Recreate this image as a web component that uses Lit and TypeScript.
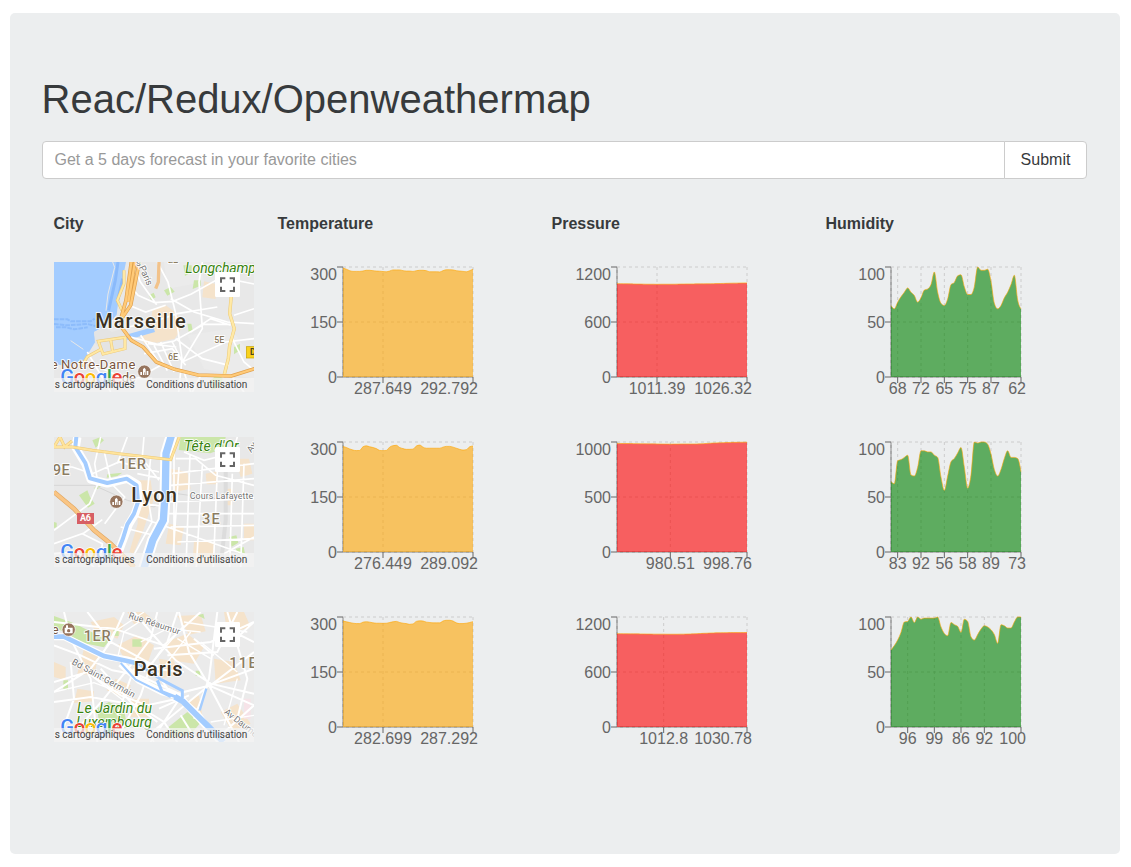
import { LitElement, html, svg, css } from "lit";
import { customElement, property } from "lit/decorators.js";

interface Series {
  values: number[];
  max: number;
  ticks: [number, string][];
}

interface City {
  name: string;
  temperature: Series;
  pressure: Series;
  humidity: Series;
}

const CITIES: City[] = [
  {
    name: "Marseille",
    temperature: {
      values: [297, 294, 290, 288, 288, 288, 289, 291, 291, 290, 289, 288.5, 287.6, 287, 289, 292, 292, 292, 290, 289, 289, 288, 290, 291, 291, 290, 287, 287, 287, 286.5, 290, 292.5, 292.5, 292, 290, 289, 288, 287, 290, 294],
      max: 300,
      ticks: [[12, "287.649"], [39, "292.792"]],
    },
    pressure: {
      values: [1018, 1018, 1017, 1017, 1016, 1015, 1014, 1014, 1013, 1012, 1012, 1012, 1011, 1012, 1012, 1012, 1012, 1012, 1013, 1014, 1014, 1015, 1015, 1015, 1016, 1016, 1016, 1017, 1017, 1018, 1019, 1020, 1021, 1022, 1023, 1024, 1024, 1025, 1026, 1026],
      max: 1200,
      ticks: [[12, "1011.39"], [39, "1026.32"]],
    },
    humidity: {
      values: [65, 62, 68, 73, 77, 81, 77, 74, 68, 72, 79, 80, 84, 95.5, 77, 67, 65, 71, 84, 86, 92, 93, 82, 75, 75, 82, 100, 97, 97, 98, 87, 67, 62, 65, 72, 77, 84, 92.5, 70, 62],
      max: 100,
      ticks: [[2, "68"], [9, "72"], [16, "65"], [23, "75"], [30, "87"], [39, "62"]],
    },
  },
  {
    name: "Lyon",
    temperature: {
      values: [288, 285, 281, 278, 276.5, 277, 287, 289.5, 287, 285, 282, 277, 276.4, 277, 286, 290, 291, 285, 282, 280, 280, 280.5, 289, 291.5, 286, 283, 283, 283, 283, 283, 286, 288, 288, 286, 283, 280, 278, 279, 287, 289],
      max: 300,
      ticks: [[12, "276.449"], [39, "289.092"]],
    },
    pressure: {
      values: [987, 987, 986, 986, 986, 985, 985, 984, 984, 983, 983, 983, 982, 982, 981, 981, 980.5, 981, 981, 982, 982, 982, 982, 982, 982, 983, 985, 987, 989, 991, 992, 993, 994, 995, 996, 997, 997, 998, 998, 998.7],
      max: 1000,
      ticks: [[16, "980.51"], [39, "998.76"]],
    },
    humidity: {
      values: [64, 62, 83, 84, 86, 88, 70, 69, 77, 92, 92, 91, 91, 88, 86, 68, 56, 69, 82, 85, 90, 95, 77, 58, 70, 100, 99, 100, 100, 98, 89, 75, 69, 75, 85, 92, 86, 86, 85, 73],
      max: 100,
      ticks: [[2, "83"], [9, "92"], [16, "56"], [23, "58"], [30, "89"], [39, "73"]],
    },
  },
  {
    name: "Paris",
    temperature: {
      values: [289, 287, 285, 283, 282, 282, 286, 287, 286, 284, 283, 283, 282.7, 283, 285, 287, 288, 285, 283, 282, 280, 281, 288, 289.5, 289, 286, 285, 284, 284, 284, 289, 291, 291, 289, 284, 282, 282, 283, 285, 287.3],
      max: 300,
      ticks: [[12, "282.699"], [39, "287.292"]],
    },
    pressure: {
      values: [1018, 1018, 1017, 1017, 1016, 1016, 1016, 1015, 1015, 1014, 1014, 1013, 1013, 1013, 1013, 1012, 1012, 1012, 1012, 1013, 1013, 1014, 1015, 1016, 1018, 1020, 1022, 1023, 1025, 1026, 1028, 1028, 1029, 1029, 1030, 1030, 1030, 1030, 1030, 1031],
      max: 1200,
      ticks: [[14, "1012.8"], [39, "1030.78"]],
    },
    humidity: {
      values: [70, 74, 79, 86, 95.5, 96, 100, 95, 100, 98, 99, 99, 99, 99, 100, 91, 85, 83, 95, 93, 91.5, 86, 98, 96, 82, 79, 84, 89, 92, 91, 88.5, 84, 76, 93, 92, 90, 90, 95.5, 100, 100],
      max: 100,
      ticks: [[5, "96"], [13, "99"], [21, "86"], [28, "92"], [39, "100"]],
    },
  },
];

/* Monotone cubic interpolation through evenly ordered points. */
function monotonePath(points: [number, number][]): string {
  const n = points.length;
  const slopes: number[] = [];
  const secant = (i: number) =>
    (points[i + 1][1] - points[i][1]) / (points[i + 1][0] - points[i][0]);
  for (let i = 1; i < n - 1; i++) {
    const a = secant(i - 1);
    const b = secant(i);
    slopes[i] =
      (Math.sign(a) + Math.sign(b)) *
      Math.min(Math.abs(a), Math.abs(b), 0.25 * Math.abs(a + b));
  }
  slopes[0] = (3 * secant(0) - slopes[1]) / 2;
  slopes[n - 1] = (3 * secant(n - 2) - slopes[n - 2]) / 2;
  let d = `M${points[0][0]},${points[0][1]}`;
  for (let i = 1; i < n; i++) {
    const [x0, y0] = points[i - 1];
    const [x1, y1] = points[i];
    const dx = (x1 - x0) / 3;
    d += `C${x0 + dx},${y0 + dx * slopes[i - 1]},${x1 - dx},${y1 - dx * slopes[i]},${x1},${y1}`;
  }
  return d;
}

@customElement("forecast-chart")
class ForecastChart extends LitElement {
  static styles = css`
    :host { display: block; width: 200px; height: 150px; }
    .chart { display: block; width: 200px; height: 150px; overflow: hidden; }
    .grid { stroke: #ccc; stroke-dasharray: 3 3; fill: none; }
    .axis { stroke: #666; fill: none; }
    .label { fill: #666; font: 16px "Liberation Sans", Arial, sans-serif; }
    .area { fill-opacity: 0.6; stroke: none; }
    .curve { fill: none; stroke: orange; stroke-width: 1; stroke-opacity: 0.6; }
  `;

  @property({ attribute: false }) series!: Series;
  @property() color = "orange";

  render() {
    const { values, max, ticks } = this.series;
    const left = 65, right = 195, top = 5, bottom = 115;
    const px = (i: number) => left + (i * (right - left)) / (values.length - 1);
    const py = (v: number) => bottom - (v / max) * (bottom - top);
    const line = monotonePath(values.map((v, i) => [px(i), py(v)] as [number, number]));
    const area = `${line}L${right},${bottom}L${left},${bottom}Z`;
    const rows = [0, max / 2, max];
    return html`<svg class="chart" viewBox="0 0 200 150">
      <path class="axis" d="M65 115H195M65 5V115"></path>
      ${rows.map((v) => svg`<line class="grid" x1=${left} x2=${right} y1=${py(v)} y2=${py(v)}></line>`)}
      ${[left, ...ticks.map(([i]) => px(i))].map(
        (x) => svg`<line class="grid" x1=${x} x2=${x} y1=${top} y2=${bottom}></line>`,
      )}
      ${ticks.map(([i, text]) => {
        const last = i === values.length - 1;
        return svg`<line class="axis" x1=${px(i)} x2=${px(i)} y1="115" y2="121"></line>
          <text class="label" x=${last ? 200 : px(i)} y="132.4" text-anchor=${last ? "end" : "middle"}>${text}</text>`;
      })}
      ${rows.map(
        (v) => svg`<line class="axis" x1="59" x2="65" y1=${py(v)} y2=${py(v)}></line>
          <text class="label" x="59" y=${Math.max(py(v), 12) + 5.7} text-anchor="end">${v}</text>`,
      )}
      <path class="area" fill=${this.color} d=${area}></path>
      <path class="curve" d=${line}></path>
    </svg>`;
  }
}

const museum = (x: number, y: number) => svg`<g transform="translate(${x} ${y})">
  <circle r="20" fill="#96745d" stroke="#fff" stroke-width="2"></circle>
  <path d="M-12 10V1h5v9zM-4 10V-7l4-5 4 5V10H1V2H-1v8zM7 10V-2h5v12z" fill="#fff"></path>
</g>`;

const marseille = svg`
  <rect x="30" y="30" width="600" height="390" fill="#e8e8e8"></rect>
  <path d="M360 30L470 30 480 90 370 110z M430 250L560 230 630 320 630 380 480 350z" fill="#ebebeb"></path>
  <path d="M325 175l40-15 35 25 12 45-20 30-55 12-28-15 12-40zM290 250l35-8 10 28-35 6zM480 88l35 8 0 45-40-5z" fill="#f5e3cb"></path>
  <path d="M315 130l14-8 6 14-14 8zM360 115l20-10 12 14-22 12zM430 215l12 0 4 20-12 4zM450 85l20 0 0 16-24 10zM418 40l25 0 0 20-20 12zM570 285l18-10 0 20-18 12zM500 385l20-18 16 12-5 25-28 10z" fill="#cbe6a9"></path>
  <path d="M30 30H246L232 100 222 155 218 188 195 215 150 240 155 268 128 312 115 340 100 330 75 344 30 335z" fill="#a3ccff"></path>
  <path d="M246 248L328 225 333 240 250 264z" fill="#a3ccff"></path>
  <path d="M222 30l-8 55-20 90M236 80l-16 70" fill="none" stroke="#8abafb" stroke-width="9"></path>
  <path d="M30 202h40l10 6h60l12-8M30 216l40 4 60-4 24 6M36 226h30l25 6 40-6" fill="none" stroke="#8dbcfb" stroke-width="6" stroke-dasharray="14 3"></path>
  <path d="M206 30l6 16-20 80-6 50M80 266l38 26" fill="none" stroke="#e8e8e8" stroke-width="3"></path>
  <path d="M150 240l32-12 22 12 26-8 15 22-12 40-58 10-22-32z" fill="#e4e4e4"></path>
  <path d="M262 105l20 25 50 22 55-4 55-22 90-50 98 20M270 30l18 58 50 70M340 30l32 60 22 90 20 140-10 100M380 140l70 40 100 30 80 5M255 160l50 20 60-20M250 225l60-10 90-30 120-20M260 255l80 22 50-10 90-50 80 0M290 250l60 90M312 275l85 10M330 280l40 76M350 270l40 90M300 305l85-15 40 50M385 270l30 60 130-60 85-10M395 260l80 60 80 20M475 30l-10 60 10 140-60 100M440 240l60-40 60 20M570 190l60-20M560 250l40 80 30 25M350 340l-80 45M420 360l20 60M470 370l-25 50M560 370l40 50M130 300l70 120M175 350l70 30 80 0" fill="none" stroke="#fff" stroke-width="5"></path>
  <path d="M345 30l-2 60-8 20" fill="none" stroke="#f2c28a" stroke-width="10"></path>
  <path d="M240 55l0 40-20 50 14 30M163 268l80-12 0 34-66 16-14-38zM200 263l6 36M170 292l-40 22-18 30" fill="none" stroke="#ecc878" stroke-width="9"></path>
  <path d="M240 55l0 40-20 50 14 30M163 268l80-12 0 34-66 16-14-38zM200 263l6 36M170 292l-40 22-18 30" fill="none" stroke="#ffe8a3" stroke-width="6"></path>
  <path d="M563 120l-6 65 14 45-14 50-4 40-14 55" fill="none" stroke="#ecca78" stroke-width="10"></path>
  <path d="M563 120l-6 65 14 45-14 50-4 40-14 55" fill="none" stroke="#ffe9a6" stroke-width="7"></path>
  <path d="M262 30l-16 115-14 50v30l30 40 35 20 40 45 55 22 70 17 100 3 70-22M286 30l-26 130-26 38M273 30l-20 120" fill="none" stroke="#e0a04c" stroke-width="11" stroke-linejoin="round"></path>
  <path d="M262 30l-16 115-14 50v30l30 40 35 20 40 45 55 22 70 17 100 3 70-22M286 30l-26 130-26 38M273 30l-20 120" fill="none" stroke="#ffca78" stroke-width="7" stroke-linejoin="round"></path>
  <text class="road" font-size="28" transform="translate(284 46) rotate(65)" textLength="62">Paris</text>
  <text class="road" font-size="28" x="276" y="42">s</text>
  <text class="district" font-size="27" x="372" y="33">2E</text>
  <text class="district" font-size="27" x="511" y="274" textLength="30">5E</text>
  <text class="district" font-size="27" x="372" y="325" textLength="30">6E</text>
  <text class="park" font-size="42" x="424" y="63" textLength="212">Longchamp</text>
  <rect x="607" y="284" width="30" height="34" fill="#f9d21d" stroke="#c7a100" stroke-width="2"></rect>
  <text x="618" y="310" font-size="26" font-weight="700" fill="#4c4220">D</text>
  <text class="place" font-size="39" x="41" y="351" text-anchor="end">de</text>
  <text class="place" font-size="39" x="51" y="351" textLength="223">Notre-Dame</text>
  <text class="place" font-size="39" x="233" y="391">de</text>
  ${museum(301, 359)}
  <text class="city" x="154" y="228" textLength="271">Marseille</text>`;

const lyon = svg`
  <rect x="30" y="30" width="600" height="390" fill="#e8e8e8"></rect>
  <path d="M380 125l50 10 10 50-50 10zM485 140l35-8 0 40-32 0zM575 95l40 0 10 45-35 10zM375 290l45 10-10 55-45-5zM280 160l40 0 8 60-30 90-30 70-12-5 25-85zM450 345l60 0 0 65-65 0zM600 290h30v50h-30zM545 185h20v50h-20z" fill="#f5e3cb"></path>
  <path d="M410 30H545l-6 34-40 15-95-10zM105 205l25-15 8 20 14 20-20 12zM145 40l25-10 10 10-25 22zM190 142l45-5-15 10-32 5zM555 330l22-5 6 22-20 12zM575 365l24-5 4 20-20 2zM545 100l30-20 10 35-30 20zM30 285l8 2 0 14-8 2zM148 183l25-8-12 12z" fill="#cbe6a9"></path>
  <path d="M30 175l120 0 100 45 80 20 70-40 70 10 90 10" fill="none" stroke="#d6d6d6" stroke-width="3"></path>
  <path d="M545 130v150l-14 130" fill="none" stroke="#dcdcdc" stroke-width="12"></path>
  <path d="M100 30l-5 32 30 50 15 45 50 12 60-14 30 18 4 55-12 35-18 30-18 48-20 55" fill="none" stroke="#fff" stroke-width="25" stroke-linejoin="round"></path>
  <path d="M30 120l55 0 60 20 80-35 120 30M170 30l-18 80 10 60-25 60-107 80M180 70l22 100 40 40-60 80M30 350l90-32 55-40M115 320l60 30-10 70M30 380l70-5 50 45M250 30l-30 80M300 30l-6 70M320 90l-10 110 14 85-55 100M280 140l70 14M280 190l82 12M290 230l75 8M270 265l340 120M230 300l120 30M295 95l50 65M390 30v370M385 140l245-30M380 175l250-20M376 225l254-10M370 260h260M380 300l250-5M405 120l-20 300M438 85l-12 335M475 115l-18 305M520 130l-12 290M565 140l-8 280M600 110l-10 310M395 95l60 0 60 50 115 30M420 75l60 25 40-10M400 345l230-10M540 380l90-50M580 30l-30 100" fill="none" stroke="#fff" stroke-width="5"></path>
  <path d="M384 20l-18 60-2 110-6 90-32 60-28 90" fill="none" stroke="#fff" stroke-width="34"></path>
  <path d="M384 20l-18 60-2 110-6 90-32 60-28 90" fill="none" stroke="#a3ccff" stroke-width="22"></path>
  <path d="M98 20l-4 40 30 48 14 46 52 14 58-13 30 20 4 50-12 35-20 32-14 45-20 50" fill="none" stroke="#a3ccff" stroke-width="12" stroke-linejoin="round"></path>
  <path d="M30 60h55l60 10 80 10 155 18 26-68M30 60l18-30 14 30 22-18" fill="none" stroke="#ecc878" stroke-width="9"></path>
  <path d="M30 60h55l60 10 80 10 155 18 26-68M30 60l18-30 14 30 22-18" fill="none" stroke="#ffe49c" stroke-width="6"></path>
  <path d="M30 195l60 50 60 65 50 40 70 70" fill="none" stroke="#e2a864" stroke-width="14"></path>
  <path d="M30 195l60 50 60 65 50 40 70 70" fill="none" stroke="#f9c584" stroke-width="10"></path>
  <text class="district" font-size="44" x="26" y="144" textLength="51">9E</text>
  <text class="district" font-size="44" x="224" y="126" textLength="82">1ER</text>
  <text class="district" font-size="44" x="474" y="291" textLength="53">3E</text>
  <text class="park" font-size="42" x="420" y="71" textLength="164">Tête d'Or</text>
  <text class="road" font-size="27" transform="translate(622 78) rotate(-55)">Av</text>
  <text class="road" font-size="27" x="437" y="216" textLength="191">Cours Lafayette</text>
  <rect x="99" y="258" width="51" height="33" fill="#d75f64"></rect>
  <text x="108" y="283" font-size="27" font-weight="700" fill="#fff" textLength="33">A6</text>
  ${museum(217, 224)}
  <text class="city" x="262" y="224" textLength="137">Lyon</text>`;

const paris = svg`
  <rect x="30" y="30" width="600" height="390" fill="#ebebeb"></rect>
  <path d="M140 60l70-15 30 25-20 40-70-30zM220 130l60-30 50 30-20 55-70-15zM250 30l50 0 30 25-60 12zM365 120l65-25 50 40-30 50-70-10zM345 170l45 8 15 40-50 10zM510 170l60 10 20 55-75 10zM425 300l40-20 10 60-20 10zM530 330l50-25 40 60-55 25zM120 140l45 15-15 65-50-5zM100 260l50 8 0 30-60 5zM215 230l45 20-12 40-60-25zM400 42l70-4 15 50-50 10zM30 180l35 15 0 40-35-10zM540 30h60l20 45-70 20zM260 290l55 0 0 55-55 0z" fill="#f5e3cb"></path>
  <path d="M30 42l60 22 105 52-15 20-60-12-90-50zM160 318l35-18 45 22 10 55-55 18-30-30zM370 378l60-48 38 34-30 35-70 10zM58 235l14 0 0 28-14 0zM208 80l16 0 0 22-14 0zM265 112h28v22h-28zM455 206h14v16h-14zM318 240l30 14-8 14-32-16zM460 40l18-5 4 16z" fill="#cbe6a9"></path>
  <path d="M600 290h20v60h-20zM475 375h24v30h-24z" fill="#f6e3e8"></path>
  <path d="M30 130l80 30 95 45 80 15 110 50 70 60 65 90M60 30l20 80 60 120 20 190M130 30l70 90 120 65 60 90M240 30l-40 90-60 80-110 70M270 30l50 60 75 85 105 70 130 30M340 30l-20 80-60 80-80 100-70 80M400 30l-30 90-50 70-30 90-60 110M470 30l-110 100-150-50-180-20M520 30l-25 200-45 120M580 30l-60 120-150 10M630 60l-130 60-170 20M630 150l-130 100-80 20-100 150M630 200l-135 50-170 140M495 250l135 60M495 250l90 170M495 250l-60-100-30-120M30 240l100-30 100 70 80 30 90-20M30 300l110-15 140 25 80 50 40 60M80 180l10 110-40 110M170 200l90 100 80 60M270 200l-50 140M420 210l-90-10M550 80l80 40M555 130l75-70M550 30l60 200-30 120M530 400l100-90M410 340l50 80M345 320l90-40M450 110l60 50" fill="none" stroke="#fff" stroke-width="6"></path>
  <path d="M30 270l120-28 100 38M140 220l130 100 60 100M180 150l30-60 90-60M220 170l20-80 60-40M290 120l80-40 100 10M300 210l120-140M340 220l100-130M420 60l190 30M470 120l110 90M400 110l100 60M580 230l-40 140M500 360l130-20" fill="none" stroke="#fff" stroke-width="4"></path>
  <path d="M30 104l30 0 120 58 70 12 90 26M230 185l55 50 70 35 50 12 90 100 40 42" fill="none" stroke="#fff" stroke-width="21"></path>
  <path d="M30 104l30 0 120 58 70 15 40 10" fill="none" stroke="#a3ccff" stroke-width="14"></path>
  <path d="M230 183l45 50 65 32 40 20" fill="none" stroke="#a3ccff" stroke-width="6"></path>
  <path d="M290 190l60 42 65 34v22M340 235l14 34 52 20" fill="none" stroke="#a3ccff" stroke-width="9"></path>
  <path d="M392 284l25 14 38 38 38 37 45 47" fill="none" stroke="#a3ccff" stroke-width="18"></path>
  <path d="M487 260l-20 65" fill="none" stroke="#a3ccff" stroke-width="7"></path>
  <text class="place" font-size="39" x="23" y="95">e</text>
  <circle cx="74" cy="83" r="20" fill="#96745d" stroke="#fff" stroke-width="2"></circle>
  <path d="M62 77h24v17H62zM66 77v-7h6v7" fill="#fff"></path>
  <circle cx="74" cy="86" r="5" fill="#96745d"></circle>
  <text class="district" font-size="44" x="119" y="117" textLength="81">1ER</text>
  <text class="district" font-size="44" x="556" y="198" textLength="82">11E</text>
  <text class="road" font-size="27" transform="translate(252 48) rotate(18)" textLength="161">Rue Réaumur</text>
  <text class="road" font-size="27" transform="translate(82 185) rotate(29)" textLength="212">Bd Saint-Germain</text>
  <text class="road" font-size="27" transform="translate(539 333) rotate(38)" textLength="132">Av Daumes</text>
  <text class="park" font-size="42" x="99" y="333" textLength="225">Le Jardin du</text>
  <text class="park" font-size="42" x="97" y="374" textLength="227">Luxembourg</text>
  <text class="city" x="269" y="222" textLength="147">Paris</text>`;

const DRAWINGS: Record<string, unknown> = { Marseille: marseille, Lyon: lyon, Paris: paris };

@customElement("city-map")
class CityMap extends LitElement {
  static styles = css`
    :host { display: block; width: 200px; height: 130px; }
    .map { display: block; width: 200px; height: 130px; overflow: hidden; font-family: Roboto, sans-serif; }
    .map text { white-space: pre; }
    .city { font-size: 60px; font-weight: 500; fill: #3b3222; stroke: #fff; stroke-opacity: 0.8; stroke-width: 6px; paint-order: stroke; }
    .district { font-weight: 500; fill: #8c7c62; stroke: #fff; stroke-width: 5px; paint-order: stroke; }
    .road { fill: #747474; stroke: #fff; stroke-width: 5px; paint-order: stroke; }
    .park { font-style: italic; fill: #38830f; stroke: #fff; stroke-width: 5px; paint-order: stroke; }
    .place { fill: #79553d; stroke: #fff; stroke-width: 5px; paint-order: stroke; }
    .logo { font-size: 61px; font-weight: 500; stroke: #fff; stroke-width: 4px; paint-order: stroke; }
    .blue { fill: #4285f4; }
    .red { fill: #ea4335; }
    .yellow { fill: #fbbc05; }
    .green { fill: #34a853; }
    .shade { fill: #f5f5f5; fill-opacity: 0.7; }
    .legal { font-size: 30px; fill: #444; }
  `;

  @property() name = "";

  render() {
    return html`<svg class="map" viewBox="30 30 600 390">
      ${DRAWINGS[this.name]}
      <text class="logo" x="49" y="396" textLength="186"><tspan class="blue">G</tspan><tspan class="red">o</tspan><tspan class="yellow">o</tspan><tspan class="blue">g</tspan><tspan class="green">l</tspan><tspan class="red">e</tspan></text>
      <rect class="shade" x="30" y="378" width="600" height="42"></rect>
      <text class="legal" x="32" y="408" textLength="240">s cartographiques</text>
      <text class="legal" x="307" y="408" textLength="303">Conditions d'utilisation</text>
      <rect x="513" y="60" width="75" height="75" rx="4" fill="#fff"></rect>
      <path d="M531 92V79h13M557 79h13v13M570 104v13h-13M544 117h-13v-13" fill="none" stroke="#666" stroke-width="6"></path>
    </svg>`;
  }
}

@customElement("app-root")
class AppRoot extends LitElement {
  static styles = css`
    :host {
      display: block;
      height: 867px;
      box-sizing: border-box;
      padding: 13px 11px 0 10px;
      background: #fff;
      color: #373a3c;
      font: 16px/24px "Liberation Sans", Arial, sans-serif;
    }
    .jumbotron {
      box-sizing: border-box;
      height: 841px;
      padding: 64px 33px 64px 32px;
      border-radius: 5px;
      background: #eceeef;
    }
    .title { margin: 0 0 20px -0.5px; font-size: 40px; font-weight: 400; line-height: 44px; }
    .search { display: flex; height: 38px; margin-bottom: 20px; }
    .field {
      flex: 1;
      min-width: 0;
      box-sizing: border-box;
      border: 1px solid #ccc;
      border-radius: 4px 0 0 4px;
      padding: 6px 12px 6px 11.5px;
      margin: 0;
      background: #fff;
      font: inherit;
      outline: none;
    }
    .field::placeholder { color: #999; opacity: 1; }
    .submit {
      box-sizing: border-box;
      width: 83px;
      margin: 0 0 0 -1px;
      padding: 6px 0;
      border: 1px solid #ccc;
      border-radius: 0 4px 4px 0;
      background: #fff;
      color: #373a3c;
      font: inherit;
    }
    .row { display: grid; grid-template-columns: 224px 274px 274px 1fr; }
    .head { height: 51px; font-weight: 700; }
    .cell { padding: 12px; }
    .head .cell { padding: 13px 12px 12px 11.5px; }
    .body { height: 175px; }
  `;

  render() {
    return html`<main class="jumbotron">
      <h1 class="title">Reac/Redux/Openweathermap</h1>
      <form class="search" @submit=${(e: Event) => e.preventDefault()}>
        <input class="field" placeholder="Get a 5 days forecast in your favorite cities" />
        <button class="submit" type="submit">Submit</button>
      </form>
      <section>
        <div class="row head">
          ${["City", "Temperature", "Pressure", "Humidity"].map((h) => html`<div class="cell">${h}</div>`)}
        </div>
        ${CITIES.map(
          (c) => html`<div class="row body">
            <div class="cell"><city-map name=${c.name}></city-map></div>
            <div class="cell"><forecast-chart .series=${c.temperature} color="orange"></forecast-chart></div>
            <div class="cell"><forecast-chart .series=${c.pressure} color="red"></forecast-chart></div>
            <div class="cell"><forecast-chart .series=${c.humidity} color="green"></forecast-chart></div>
          </div>`,
        )}
      </section>
    </main>`;
  }
}
